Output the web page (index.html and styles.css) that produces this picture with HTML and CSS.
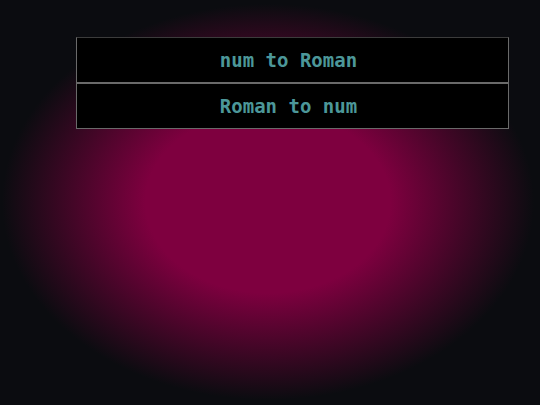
FILE: index.html
```html
<!DOCTYPE html>
<html>
<head>
<meta charset="utf-8">
<link rel="stylesheet" href="styles.css">
</head>
<body>
<div class="page">
  <div class="menu">
    <button class="btn">num to Roman</button>
    <button class="btn">Roman to num</button>
  </div>
</div>
</body>
</html>
```
FILE: styles.css
```css
html, body {
  margin: 0;
  padding: 0;
  width: 540px;
  height: 405px;
  overflow: hidden;
}
body {
  background: #0b0c10 radial-gradient(ellipse 266px 198px at 268px 202px, #7e003f 0%, #7e003f 46%, #0b0c10 100%);
}
.page {
  padding-top: 37px;
  padding-left: 76px;
}
.menu {
  width: 433px;
  display: flex;
  flex-direction: column;
}
.btn {
  display: block;
  width: 100%;
  height: 46px;
  margin: 0;
  padding: 0 8px 0 0;
  background: #000;
  border: 1px solid #6a6a6a;
  border-top-color: #3c3c3c;
  color: #4c9799;
  font-family: "DejaVu Sans Mono", monospace;
  font-weight: bold;
  font-size: 19px;
  text-align: center;
  line-height: 44px;
}
.btn + .btn {
  border-top-color: #6a6a6a;
}
```
